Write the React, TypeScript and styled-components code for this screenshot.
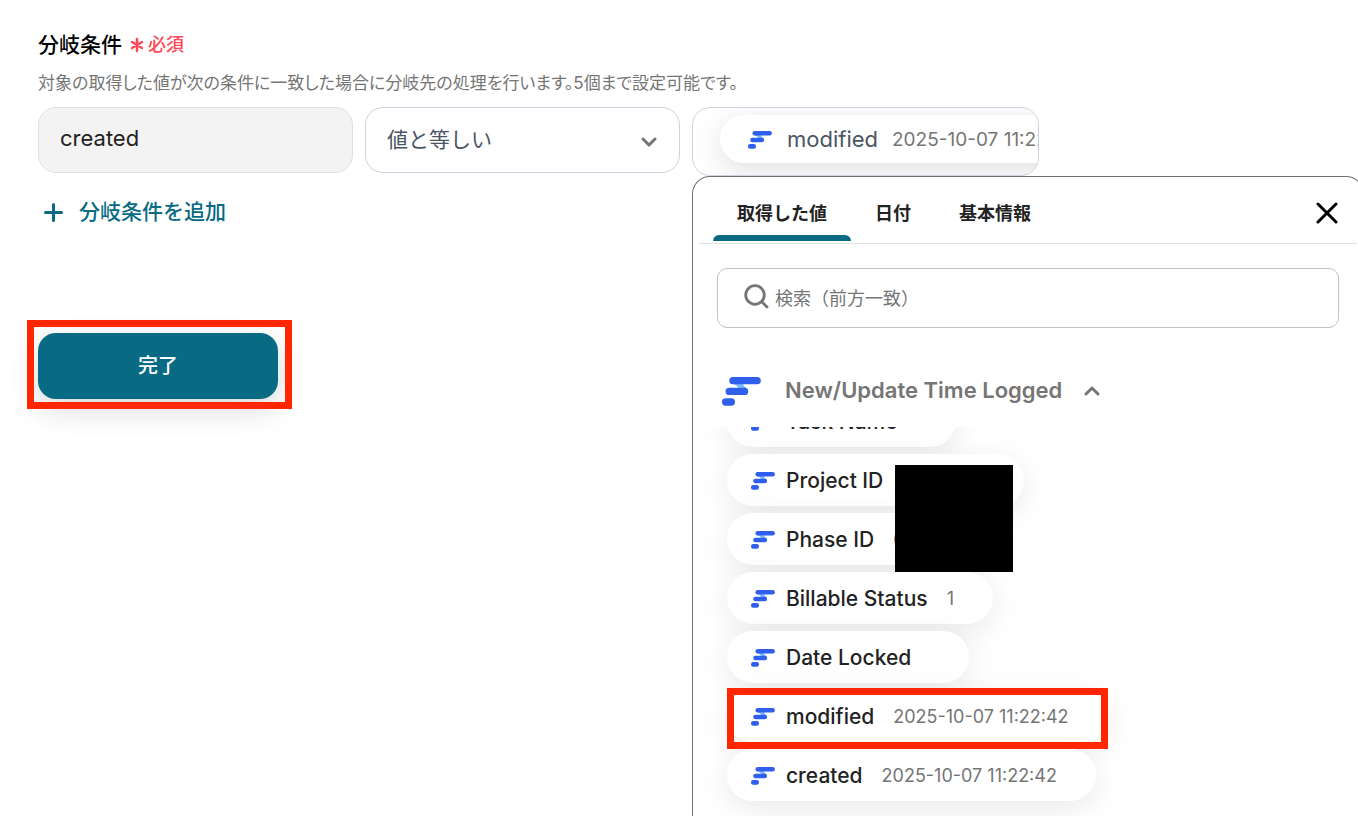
import React, { useLayoutEffect, useRef } from 'react';
import styled, { createGlobalStyle } from 'styled-components';

const GlobalStyle = createGlobalStyle`
  *, *::before, *::after { box-sizing: border-box; }
  html, body { margin: 0; background: #fff; }
  body {
    overflow: hidden;
    color: #222;
    font-family: Inter, "Noto Sans CJK JP", sans-serif;
  }
  button, input, select { font: inherit; }
`;

const Page = styled.main`
  min-height: 100vh;
  padding: 33px 0 0 38px;
`;

const Title = styled.h1`
  display: flex;
  align-items: center;
  gap: 8px;
  margin: 0;
  font-size: 21px;
  line-height: 24px;
  font-weight: 500;
  color: #000;
`;

const Required = styled.span`
  display: flex;
  align-items: center;
  gap: 4px;
  font-size: 18px;
  color: #ff4757;
`;

const Description = styled.p`
  margin: 14px 0 12px;
  font-size: 17px;
  line-height: 24px;
  font-feature-settings: "palt";
  color: #757575;
`;

const Fields = styled.div`
  display: grid;
  grid-template-columns: 315px 315px minmax(0, 1fr);
  gap: 12px;
  align-items: start;
  height: 66px;
`;

const TextField = styled.input`
  width: 100%;
  height: 66px;
  padding: 0 21px 4px;
  border: 1px solid #dfe1e6;
  border-radius: 18px;
  background: #f3f3f3;
  color: #222;
  font-size: 22px;
`;

const SelectBox = styled.div`
  display: grid;
  align-items: center;
  color: #757575;
  & > * { grid-area: 1 / 1; }
  & > svg { justify-self: end; margin: 4px 23px 0 0; pointer-events: none; }
`;

const Select = styled.select`
  appearance: none;
  width: 100%;
  height: 66px;
  padding: 0 21px 2px;
  border: 1px solid #cdd2de;
  border-radius: 18px;
  background: #fff;
  color: #4b5563;
  font-size: 21px;
`;

const ValueColumn = styled.div`
  position: relative;
`;

const ValueField = styled.div`
  max-width: 347px;
  height: 69px;
  padding: 7px 0 0 27px;
  overflow: hidden;
  border: 1px solid #cdd2de;
  border-radius: 18px;
`;

const Chip = styled.div`
  display: flex;
  align-items: center;
  width: max-content;
  height: 48px;
  padding: 0 40px 0 28px;
  border-radius: 24px;
  background: #fff;
  box-shadow: 0 8px 32px rgba(0, 0, 0, 0.12);
  color: #4b5563;
  font-size: 22px;
`;

const ChipName = styled.span`
  margin: 0 14px 0 15px;
`;

const Muted = styled.span<{ $size?: number }>`
  font-size: ${(p) => p.$size ?? 18}px;
  font-weight: 400;
  color: #757575;
`;

const AddButton = styled.button`
  display: flex;
  align-items: center;
  gap: 16px;
  margin: 23px 0 0 6px;
  padding: 0;
  border: 0;
  background: none;
  color: #096b83;
  font-size: 21px;
  line-height: 32px;
  font-weight: 500;
`;

const Marked = styled.div`
  position: relative;
  width: max-content;
  margin-top: 105px;
`;

const DoneButton = styled.button`
  width: 240px;
  height: 66px;
  padding: 0 0 4px;
  border: 0;
  border-radius: 18px;
  background: #096b83;
  box-shadow: 0 10px 30px rgba(20, 40, 60, 0.18);
  color: #fff;
  font-size: 20px;
  font-weight: 500;
`;

const Marker = styled.span<{ $inset: string }>`
  position: absolute;
  inset: ${(p) => p.$inset};
  z-index: 2;
  border: 7px solid #ff2600;
  pointer-events: none;
`;

const Panel = styled.section`
  position: absolute;
  top: 69px;
  left: 0;
  right: -6px;
  display: flex;
  flex-direction: column;
  height: calc(100vh - 176px);
  border: 1px solid #707070;
  border-bottom: 0;
  border-radius: 18px 18px 0 0;
  background: #fff;
`;

const PanelHeader = styled.header`
  display: flex;
  justify-content: space-between;
  margin: 6px 6px 0;
  padding: 0 19px 2px 14px;
  border-bottom: 1px solid #dedede;
`;

const Tabs = styled.div`
  display: flex;
`;

const Tab = styled.button<{ $active?: boolean }>`
  position: relative;
  height: 58px;
  padding: 0 24px;
  border: 0;
  background: none;
  color: #222;
  font-size: 18px;
  font-weight: 600;
  &::after {
    content: "";
    display: ${(p) => (p.$active ? 'block' : 'none')};
    position: absolute;
    inset: auto 0 0;
    height: 6px;
    border-radius: 6px 6px 0 0;
    background: #096b83;
  }
`;

const CloseButton = styled.button`
  display: grid;
  place-items: center;
  align-self: center;
  padding: 2px 0 0;
  border: 0;
  background: none;
  color: #000;
`;

const SearchBox = styled.label`
  display: flex;
  align-items: center;
  gap: 6px;
  height: 60px;
  margin: 24px 24px 0;
  padding: 0 26px;
  border: 1px solid #c2c2c2;
  border-radius: 10px;
  color: #757575;
  & > svg { flex: none; margin-bottom: 3px; }
`;

const SearchInput = styled.input`
  flex: 1;
  min-width: 0;
  padding: 0;
  border: 0;
  outline: 0;
  background: none;
  font-size: 18px;
  &::placeholder { color: #757575; opacity: 1; }
`;

const GroupButton = styled.button`
  display: flex;
  align-items: center;
  align-self: flex-start;
  height: 74px;
  margin: 25px 0 0 29px;
  padding: 0;
  border: 0;
  background: none;
  color: #757575;
  font-size: 22px;
  font-weight: 600;
`;

const GroupName = styled.span`
  margin: 0 22px 0 24px;
`;

const Scroller = styled.div`
  flex: 1;
  min-height: 0;
  overflow-y: auto;
  scrollbar-width: none;
  margin-right: 6px;
`;

const List = styled.ul`
  display: flex;
  flex-direction: column;
  align-items: flex-start;
  gap: 7px;
  margin: 0;
  padding: 0 0 48px 34px;
  list-style: none;
`;

const Item = styled.li`
  position: relative;
`;

const Pill = styled.button`
  display: flex;
  align-items: center;
  height: 52px;
  padding: 0 39px 0 24px;
  border: 0;
  border-radius: 26px;
  background: #fff;
  box-shadow: 0 8px 32px rgba(0, 0, 0, 0.09);
  color: #222;
  font-size: 21px;
  font-weight: 500;
`;

const PillName = styled.span`
  margin: 0 19px 0 11px;
`;

const HiddenValue = styled.span<{ $width: number }>`
  width: ${(p) => p.$width}px;
`;

const Redaction = styled.span`
  position: absolute;
  top: 11px;
  left: 168px;
  z-index: 1;
  width: 118px;
  height: 107px;
  background: #000;
`;

const LogoSvg = styled.svg`
  flex: none;
  margin-top: 2px;
`;

const Logo = ({ width = 24 }: { width?: number }) => (
  <LogoSvg width={width} height={Math.round((width * 29) / 39)} viewBox="0 0 39 29" aria-hidden="true">
    <path d="M9 6h12q0 3 4 5.5H17q-2-3.5-8-5.5z" fill="#7dbcf7" />
    <rect x="7.3" y="0" width="31.5" height="7.3" rx="3.6" fill="#2f5fec" />
    <rect x="3.6" y="10.8" width="22.6" height="7.2" rx="3.6" fill="#2f5fec" />
    <rect x="0" y="21.2" width="13" height="7.5" rx="3.6" fill="#2f5fec" />
  </LogoSvg>
);

const Stroke = ({ d, w, h, sw }: { d: string; w: number; h: number; sw: number }) => (
  <svg width={w} height={h} viewBox={`0 0 ${w} ${h}`} fill="none" stroke="currentColor"
    strokeWidth={sw} strokeLinecap="round" strokeLinejoin="round" aria-hidden="true">
    <path d={d} />
  </svg>
);

type Entry = { name: string; value?: string; hidden?: number; redacted?: boolean; marked?: boolean };

const entries: Entry[] = [
  { name: 'Task Name' },
  { name: 'Project ID', hidden: 83, redacted: true },
  { name: 'Phase ID', value: '0', hidden: 40 },
  { name: 'Billable Status', value: '1' },
  { name: 'Date Locked' },
  { name: 'modified', value: '2025-10-07 11:22:42', marked: true },
  { name: 'created', value: '2025-10-07 11:22:42' },
];

export default function App() {
  const scroller = useRef<HTMLDivElement>(null);

  useLayoutEffect(() => {
    if (scroller.current) scroller.current.scrollTop = 32;
  }, []);

  return (
    <>
      <GlobalStyle />
      <Page>
        <Title>
          分岐条件
          <Required>
            <Stroke d="M7 2v12M2 5l10 6M12 5L2 11" w={14} h={16} sw={2.5} />
            必須
          </Required>
        </Title>
        <Description>
          対象の取得した値が次の条件に一致した場合に分岐先の処理を行います。5個まで設定可能です。
        </Description>
        <Fields>
          <TextField aria-label="対象" defaultValue="created" readOnly />
          <SelectBox>
            <Select aria-label="条件">
              <option>値と等しい</option>
            </Select>
            <Stroke d="M2 2l6 6l6-6" w={16} h={11} sw={3} />
          </SelectBox>
          <ValueColumn>
            <ValueField>
              <Chip>
                <Logo />
                <ChipName>modified</ChipName>
                <Muted $size={19}>2025-10-07 11:22:42</Muted>
              </Chip>
            </ValueField>
            <Panel>
              <PanelHeader>
                <Tabs role="tablist">
                  <Tab role="tab" aria-selected="true" $active>取得した値</Tab>
                  <Tab role="tab" aria-selected="false">日付</Tab>
                  <Tab role="tab" aria-selected="false">基本情報</Tab>
                </Tabs>
                <CloseButton aria-label="閉じる">
                  <Stroke d="M2 2l18 18M20 2L2 20" w={22} h={22} sw={3} />
                </CloseButton>
              </PanelHeader>
              <SearchBox>
                <svg width="25" height="25" viewBox="0 0 25 25" fill="none" stroke="currentColor"
                  strokeWidth="2.8" strokeLinecap="round" aria-hidden="true">
                  <circle cx="11" cy="11" r="9.3" />
                  <path d="M17.8 17.8l5.2 5.2" />
                </svg>
                <SearchInput aria-label="検索" placeholder="検索（前方一致）" />
              </SearchBox>
              <GroupButton aria-expanded="true">
                <Logo width={39} />
                <GroupName>New/Update Time Logged</GroupName>
                <Stroke d="M2 9l6-6l6 6" w={16} h={11} sw={3} />
              </GroupButton>
              <Scroller ref={scroller}>
                <List>
                  {entries.map((e) => (
                    <Item key={e.name}>
                      <Pill>
                        <Logo />
                        <PillName>{e.name}</PillName>
                        {e.value && <Muted>{e.value}</Muted>}
                        {e.hidden && <HiddenValue $width={e.hidden} />}
                      </Pill>
                      {e.redacted && <Redaction />}
                      {e.marked && <Marker $inset="-2px 0 -7px" />}
                    </Item>
                  ))}
                </List>
              </Scroller>
            </Panel>
          </ValueColumn>
        </Fields>
        <AddButton>
          <Stroke d="M9.5 1.5v16M1.5 9.5h16" w={19} h={19} sw={3} />
          分岐条件を追加
        </AddButton>
        <Marked>
          <DoneButton>完了</DoneButton>
          <Marker $inset="-13px -14px -10px -11px" />
        </Marked>
      </Page>
    </>
  );
}
